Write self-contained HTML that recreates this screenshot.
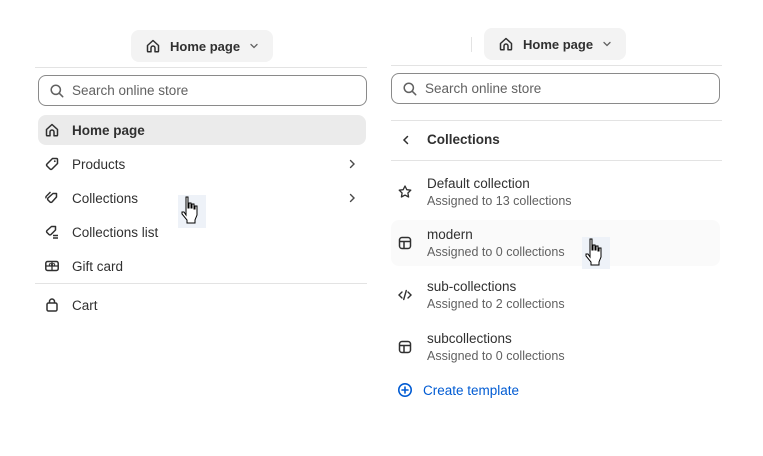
<!DOCTYPE html>
<html><head><meta charset="utf-8"><style>
*{margin:0;padding:0;box-sizing:border-box}
body{width:763px;height:456px;background:#fff;font-family:"Liberation Sans",sans-serif;color:#303030;position:relative;overflow:hidden;font-size:13px}
.a{position:absolute}
.pill{background:#f3f3f3;border-radius:8px;height:32px;width:142px;font-weight:bold;font-size:13px;display:flex;align-items:center;padding-left:14px}
.pill svg{margin-right:9px}
.pill .ch{margin-left:8px}
.line{height:1px;background:#e3e3e3}
.search{border:1px solid #8a8a8a;border-radius:8px;height:31px;display:flex;align-items:center;padding-left:10px;color:#616161;font-size:13.5px}
.search svg{margin-right:7px}
.row{position:absolute;left:38px;width:328px;height:30px;display:flex;align-items:center;padding-left:6px;font-size:13.5px}
.row svg{margin-right:12px;flex:none}
.row svg.chev{position:absolute;right:8px;top:9px;margin:0}
.t{font-size:13.5px}
.s{font-size:12.5px;color:#616161;margin-top:3px}
.item{position:absolute;left:391px;width:329px;height:46px;display:flex;align-items:center;padding-left:6px}
.item svg{margin-right:14px;flex:none}
.cur{position:absolute;background:#eef2f8;width:28px;height:33px}
</style></head><body>
<svg width="0" height="0" style="position:absolute"><defs>
<symbol id="home" viewBox="0 0 16 16"><path d="M2.5 7.5 8 2.5l5.5 5V13a.8.8 0 0 1-.8.8H10V10a2 2 0 0 0-4 0v3.8H3.3a.8.8 0 0 1-.8-.8z" fill="none" stroke="#303030" stroke-width="1.5" stroke-linejoin="round"/></symbol>
<symbol id="dn" viewBox="0 0 12 12"><path d="M3 4.5 6 7.5 9 4.5" fill="none" stroke="#616161" stroke-width="1.3" stroke-linecap="round"/></symbol>
<symbol id="srch" viewBox="0 0 16 16"><circle cx="6.8" cy="6.8" r="4.6" fill="none" stroke="#616161" stroke-width="1.5"/><path d="m10.3 10.3 3.4 3.4" stroke="#616161" stroke-width="1.5" stroke-linecap="round"/></symbol>
<symbol id="rt" viewBox="0 0 12 12"><path d="M4.5 2.5 8 6 4.5 9.5" fill="none" stroke="#4a4a4a" stroke-width="1.4" stroke-linecap="round"/></symbol>
<symbol id="tpl" viewBox="0 0 16 16"><rect x="2.5" y="2.5" width="11" height="11" rx="2.5" fill="none" stroke="#303030" stroke-width="1.5"/><path d="M2.5 6.5h11M7 6.5v7" stroke="#303030" stroke-width="1.5"/></symbol>
</defs></svg>

<!-- LEFT -->
<div class="a pill" style="left:131px;top:30px"><svg width="16" height="16"><use href="#home"/></svg>Home page<svg class="ch" width="12" height="12"><use href="#dn"/></svg></div>
<div class="a line" style="left:35px;top:67px;width:332px"></div>
<div class="a search" style="left:38px;top:75px;width:329px"><svg width="16" height="16"><use href="#srch"/></svg>Search online store</div>
<div class="row" style="top:115px;background:#ebebeb;border-radius:8px;font-weight:bold"><svg width="16" height="16"><use href="#home"/></svg>Home page</div>
<div class="row" style="top:149px"><svg width="16" height="16" viewBox="0 0 16 16"><path d="M8.5 2.5h4a1 1 0 0 1 1 1v4L8 13a1.5 1.5 0 0 1-2 0L3 10a1.5 1.5 0 0 1 0-2z" fill="none" stroke="#303030" stroke-width="1.5" stroke-linejoin="round"/><circle cx="10.8" cy="5.2" r=".9" fill="#303030"/></svg>Products<svg class="chev" width="12" height="12"><use href="#rt"/></svg></div>
<div class="row" style="top:183px"><svg width="16" height="16" viewBox="0 0 16 16"><path d="M9 3.5h3.5v3.5L8 12a1.4 1.4 0 0 1-2 0L4 10a1.4 1.4 0 0 1 0-2z" fill="none" stroke="#303030" stroke-width="1.5" stroke-linejoin="round"/><path d="M6.5 2 2.3 6.3a1.4 1.4 0 0 0 0 2" fill="none" stroke="#303030" stroke-width="1.4"/></svg>Collections<svg class="chev" width="12" height="12"><use href="#rt"/></svg></div>
<div class="row" style="top:217px"><svg width="16" height="16" viewBox="0 0 16 16"><path d="M7.5 2.5h4v3.5L7 10.5a1.4 1.4 0 0 1-2 0L3 8.5a1.4 1.4 0 0 1 0-2z" fill="none" stroke="#303030" stroke-width="1.5" stroke-linejoin="round"/><path d="M9 11.5h5M9 14h5" stroke="#303030" stroke-width="1.4"/></svg>Collections list</div>
<div class="row" style="top:251px"><svg width="16" height="16" viewBox="0 0 16 16"><rect x="1.8" y="3.5" width="12.4" height="9" rx="1.8" fill="none" stroke="#303030" stroke-width="1.5"/><path d="M1.8 8h12.4M8 3.5v9" stroke="#303030" stroke-width="1.3"/><circle cx="6.5" cy="6.8" r="1.2" fill="none" stroke="#303030"/><circle cx="9.5" cy="6.8" r="1.2" fill="none" stroke="#303030"/></svg>Gift card</div>
<div class="a line" style="left:35px;top:283px;width:332px"></div>
<div class="row" style="top:290px"><svg width="16" height="16" viewBox="0 0 16 16"><rect x="3" y="6" width="10" height="8" rx="1.5" fill="none" stroke="#303030" stroke-width="1.5"/><path d="M5.5 6V4.5a2.5 2.5 0 0 1 5 0V6" fill="none" stroke="#303030" stroke-width="1.5"/></svg>Cart</div>
<div class="cur" style="left:178px;top:195px"><svg width="28" height="33" viewBox="0 0 28 33"><path d="M8 2h2v11h1V8h2v5h1V9h2v5h1v-3h2v9l-2 5v3H9v-3l-5-6v-2h2l2 3z" fill="#fff" stroke="#000" stroke-width="1"/></svg></div>

<!-- RIGHT -->
<div class="a" style="left:471px;top:37px;width:1px;height:15px;background:#e3e3e3"></div>
<div class="a pill" style="left:484px;top:28px"><svg width="16" height="16"><use href="#home"/></svg>Home page<svg class="ch" width="12" height="12"><use href="#dn"/></svg></div>
<div class="a line" style="left:391px;top:65px;width:331px"></div>
<div class="a search" style="left:391px;top:73px;width:329px"><svg width="16" height="16"><use href="#srch"/></svg>Search online store</div>
<div class="a line" style="left:391px;top:120px;width:331px"></div>
<div class="a" style="left:400px;top:134px"><svg width="12" height="12" viewBox="0 0 12 12"><path d="M7.5 2.5 4 6l3.5 3.5" fill="none" stroke="#303030" stroke-width="1.5" stroke-linecap="round"/></svg></div>
<div class="a" style="left:427px;top:132px;font-weight:bold;font-size:13.5px">Collections</div>
<div class="a line" style="left:391px;top:160px;width:331px"></div>
<div class="item" style="top:169px"><svg width="16" height="16" viewBox="0 0 16 16"><path d="m8 2 1.8 3.7 4 .5-2.9 2.8.7 4L8 11.1 4.4 13l.7-4-2.9-2.8 4-.5z" fill="none" stroke="#303030" stroke-width="1.3" stroke-linejoin="round"/></svg><div><div class="t">Default collection</div><div class="s">Assigned to 13 collections</div></div></div>
<div class="item" style="top:220px;background:#fafafa;border-radius:8px"><svg width="16" height="16"><use href="#tpl"/></svg><div><div class="t">modern</div><div class="s">Assigned to 0 collections</div></div></div>
<div class="item" style="top:272px"><svg width="16" height="16" viewBox="0 0 16 16"><path d="M5 5 2 8l3 3M11 5l3 3-3 3M9.3 3.5 6.7 12.5" fill="none" stroke="#303030" stroke-width="1.4" stroke-linecap="round"/></svg><div><div class="t">sub-collections</div><div class="s">Assigned to 2 collections</div></div></div>
<div class="item" style="top:324px"><svg width="16" height="16"><use href="#tpl"/></svg><div><div class="t">subcollections</div><div class="s">Assigned to 0 collections</div></div></div>
<div class="a" style="left:397px;top:382px;display:flex;align-items:center;color:#005bd3;font-size:13.5px"><svg width="16" height="16" viewBox="0 0 16 16" style="margin-right:10px"><circle cx="8" cy="8" r="6.2" fill="none" stroke="#005bd3" stroke-width="1.6"/><path d="M8 5v6M5 8h6" stroke="#005bd3" stroke-width="1.6" stroke-linecap="round"/></svg>Create template</div>
<div class="cur" style="left:582px;top:237px;height:32px"><svg width="28" height="33" viewBox="0 0 28 33"><path d="M8 2h2v11h1V8h2v5h1V9h2v5h1v-3h2v9l-2 5v3H9v-3l-5-6v-2h2l2 3z" fill="#fff" stroke="#000" stroke-width="1"/></svg></div>
</body></html>
